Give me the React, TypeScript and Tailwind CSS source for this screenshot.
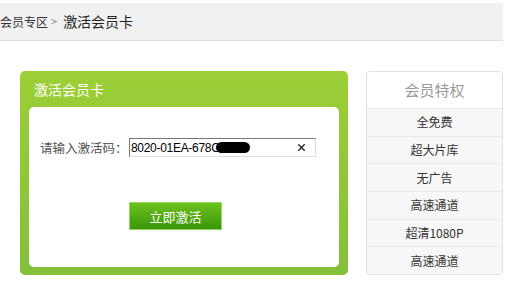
import { X } from "lucide-react";

const perks = ["全免费", "超大片库", "无广告", "高速通道", "超清1080P", "高速通道"];

const ActivateCard = () => {
  return (
    <div className="w-[328px] h-[204px] rounded-[5px] bg-gradient-to-b from-[#9ccf36] to-[#84c03a] flex flex-col">
      <div className="h-[36px] flex items-center pl-[14px] text-white text-[14px]">激活会员卡</div>
      <div className="mx-[9px] h-[160px] bg-white rounded-[5px] pt-[31px] pl-[11px]">
        <div className="flex items-center">
          <span className="w-[89px] shrink-0 whitespace-nowrap text-[12.5px] text-[#555] leading-[19px]">请输入激活码：</span>
          <div className="w-[187px] h-[19px] shrink-0 border border-t-[#777] border-l-[#777] border-r-[#ddd] border-b-[#ddd] flex items-center pl-[1px] pr-[8px]">
            <span className="font-['Liberation_Sans',sans-serif] text-[12px] text-black tracking-[-0.3px]">8020-01EA-678C</span>
            <span className="inline-block w-[34px] h-[11px] -ml-[4px] bg-black rounded-full"></span>
            <span className="flex-1"></span>
            <X size={11} strokeWidth={3} className="text-[#222]" />
          </div>
        </div>
        <button className="mt-[45px] ml-[89px] w-[93px] h-[28px] border border-[#8fd86a] bg-gradient-to-b from-[#6cc21c] to-[#3a9608] text-white text-[13px] leading-none flex items-center justify-center">
          立即激活
        </button>
      </div>
    </div>
  );
};

const Perks = () => {
  return (
    <div className="w-[137px] h-[204px] border border-[#e0e0e0] rounded-[4px] overflow-hidden flex flex-col">
      <div className="h-[36px] flex items-center justify-center text-[15px] text-[#999] bg-white">会员特权</div>
      {perks.map((p, i) => (
        <div key={i} className="flex-1 border-t border-[#e8e8e8] bg-[#f7f7f7] flex items-center justify-center text-[12px] text-[#333]">
          {p}
        </div>
      ))}
    </div>
  );
};

export default function App() {
  return (
    <div className="w-[515px] h-[291px] bg-white overflow-hidden font-['Noto_Sans_CJK_SC',sans-serif]">
      <div className="w-[503px] mt-[3px] h-[38px] bg-[#f1f1f1] border-b border-[#dedede] flex items-center">
        <span className="ml-0 text-[12px] text-[#333]">会员专区</span>
        <span className="ml-[3px] text-[11px] text-[#888]">&gt;</span>
        <span className="ml-[6px] text-[14px] text-[#222]">激活会员卡</span>
      </div>
      <div className="flex pl-[20px] pt-[30px] gap-[18px]">
        <ActivateCard />
        <Perks />
      </div>
    </div>
  );
}
